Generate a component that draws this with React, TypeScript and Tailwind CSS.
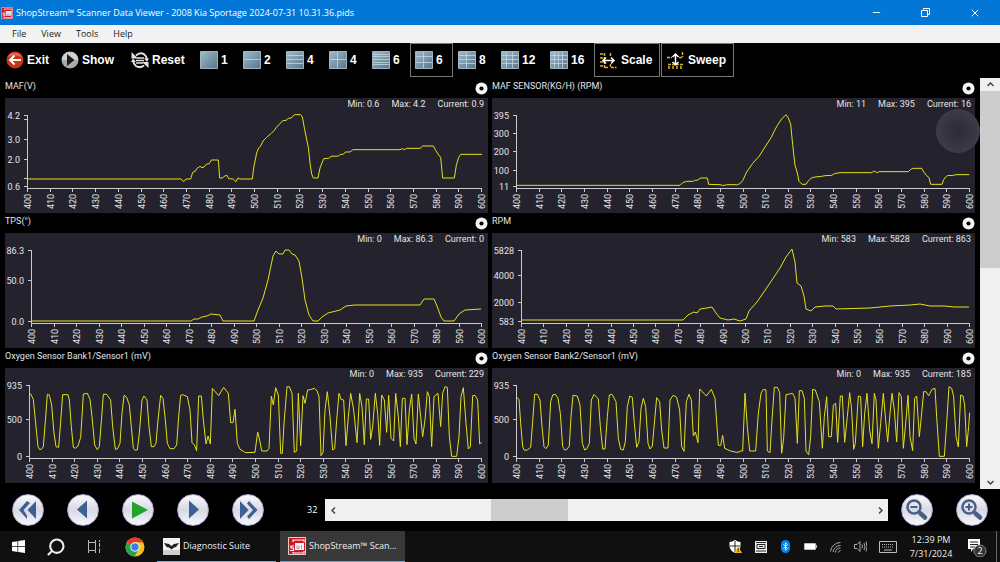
import type { ReactNode } from 'react'
import { Bluetooth, Minus, Search, X } from 'lucide-react'

interface Segment {
  at: number
  pts: string
}

interface Tick {
  y: number
  label?: string
}

interface Pid {
  title: string
  min: string
  max: string
  current: string
  axis: number
  end: number
  ticks: Tick[]
  // trace origin and units per pixel
  ox: number
  oy: number
  unit: number
  segments: Segment[]
}

const PIDS: Pid[] = [
  {
    title: 'MAF(V)', min: '0.6', max: '4.2', current: '0.9',
    axis: 22, end: 476,
    ticks: [{ y: 17, label: '4.2' }, { y: 21 }, { y: 41, label: '3.0' }, { y: 61, label: '2.0' }, { y: 80 }, { y: 88, label: '0.6' }],
    ox: -5, oy: -20, unit: 3,
    segments: [
      { at: 0, pts: '81,303 544,303 551,311 558,303 572,303 578,283 586,280 590,272 600,265 606,269 612,267 620,258 628,257 634,246 655,246 659,300 668,300 672,295 681,292 686,302 700,303 708,311 714,300 720,303 750,303' },
      { at: 750, pts: '0,303 7,303 11,270 20,225 26,210 32,204 39,189 50,178 65,165 72,158 80,147 90,137 98,128 108,127 115,121 124,120 133,110 152,110 157,117 164,155 175,208 181,262 185,288 190,300 204,300 210,270 221,242 236,241 243,235 265,234 272,229 280,229 286,222 300,222 309,215 450,215 457,212 464,215 470,211 510,211 518,204 550,204 556,215 564,228 572,238 578,300 613,300 619,262 626,238 632,229 696,229' },
    ],
  },
  {
    title: 'MAF SENSOR(KG/H) (RPM)', min: '11', max: '395', current: '16',
    axis: 24, end: 477,
    ticks: [{ y: 17, label: '395' }, { y: 35, label: '300' }, { y: 53, label: '200' }, { y: 72, label: '100' }, { y: 88, label: '11' }],
    ox: -2, oy: -20, unit: 3,
    segments: [
      { at: 0, pts: '79,322 570,322 578,314 590,310 610,310 614,307 625,306 630,300 652,300 656,319 690,320 697,322 705,322 710,320 735,320 740,321 745,319 750,317' },
      { at: 750, pts: '0,317 8,308 20,282 38,256 58,234 75,207 94,178 100,165 112,142 125,123 138,110 145,120 152,138 158,200 165,262 172,285 177,310 186,319 198,319 204,310 214,300 225,297 245,295 255,293 275,292 283,287 300,284 395,284 400,280 405,280 410,284 418,281 505,281 512,274 520,271 545,271 552,283 560,293 567,299 572,319 606,319 611,305 617,297 622,293 640,292 648,290 688,290' },
    ],
  },
  {
    title: 'TPS(°)', min: '0', max: '86.3', current: '0',
    axis: 26, end: 476,
    ticks: [{ y: 17, label: '86.3' }, { y: 47, label: '50.0' }, { y: 88, label: '0.0' }],
    ox: -5, oy: -233, unit: 1,
    segments: [
      { at: 0, pts: '31,321 191,321 194,319 198,319 202,317 207,316 211,314 220,315 223,321 254,321 258,310 263,298 268,280 273,256 276,251 279,254 283,254 285,250 289,250 292,254 295,255 299,261 302,278 305,300 309,315 313,321 318,321 322,317 328,313 340,310 346,306 355,305 420,305 424,299 434,299 437,306 441,317 444,321 454,321 459,314 465,310 481,309' },
    ],
  },
  {
    title: 'RPM', min: '583', max: '5828', current: '863',
    axis: 29, end: 477,
    ticks: [{ y: 17, label: '5828' }, { y: 42, label: '4000' }, { y: 69, label: '2000' }, { y: 88, label: '583' }],
    ox: -492, oy: -233, unit: 1,
    segments: [
      { at: 0, pts: '521,320 683,320 688,315 694,312 697,313 700,309 707,308 712,307 716,313 720,318 728,320 734,319 740,321 746,319 749,311 757,302 770,283 780,268 786,257 792,249 795,262 797,283 801,286 804,296 806,309 811,311 815,307 825,306 833,306 836,309 870,308 890,306 910,305 920,304 930,306 945,306 954,307 969,307' },
    ],
  },
  {
    title: 'Oxygen Sensor Bank1/Sensor1 (mV)', min: '0', max: '935', current: '229',
    axis: 24, end: 476,
    ticks: [{ y: 17, label: '935' }, { y: 51, label: '500' }, { y: 88, label: '0' }],
    ox: -5, oy: -18, unit: 3,
    segments: [
      { at: 0, pts: '88,130 92,132 100,148 106,210 114,290 118,298 124,298 130,290 136,215 142,133 148,135 155,165 162,250 168,290 176,292 182,215 188,134 204,134 208,150 214,230 220,292 226,295 234,288 242,262 246,200 250,132 262,130 270,148 276,200 284,285 292,299 298,290 304,215 310,133 320,133 332,150 338,230 346,298 352,297 360,280 366,190 372,136 380,142 388,165 394,230 400,295 404,300 412,300 418,250 426,150 432,138 441,150 447,230 454,290 462,290 468,280 474,210 482,136 489,145 496,210 502,280 510,296 522,296 530,285 536,200 542,136 548,134 562,140 570,180 576,278 583,285 590,302 596,138 604,138 610,210 618,282 624,258 631,282 637,115 656,137 671,112 685,130 692,218 699,218 705,178 712,280 720,298 732,305 735,308' },
      { at: 735, pts: '0,308 30,307 38,246 44,270 50,303 66,303 72,295 79,138 85,165 92,113 100,135 107,310 112,310 117,220 126,110 133,110 141,130 148,307 155,303 160,130 167,287 174,137 180,160 188,120 196,119 208,115 216,122 222,140 228,317 234,308 240,180 247,125 255,200 263,300 269,296 275,210 282,130 288,148 296,150 303,287 310,200 317,130 326,180 336,278 344,130 351,170 358,284 364,147 371,147 377,268 383,230 391,130 398,190 404,286 410,135 418,150 425,247 431,136 438,265 446,273 452,130 460,200 466,290 472,145 480,145 486,284 493,180 500,132 507,265 513,282 520,132 527,200 533,260 540,210 547,125 553,140 560,290 567,140 579,130 587,230 593,130 600,110 607,112 613,260 620,319 635,319 642,260 648,140 655,113 663,220 670,297 676,290 683,137 690,136 698,150 704,282 710,277' },
    ],
  },
  {
    title: 'Oxygen Sensor Bank2/Sensor1 (mV)', min: '0', max: '935', current: '185',
    axis: 24, end: 477,
    ticks: [{ y: 17, label: '935' }, { y: 51, label: '500' }, { y: 88, label: '0' }],
    ox: -2, oy: -18, unit: 3,
    segments: [
      { at: 0, pts: '80,142 87,148 92,220 98,290 103,301 112,300 122,292 128,215 134,133 142,133 150,150 156,230 162,290 168,296 175,285 182,155 188,135 196,133 204,145 211,190 218,290 224,300 230,299 238,288 243,200 249,136 262,138 270,165 277,280 284,300 290,297 298,280 304,150 312,133 325,147 331,230 338,297 345,297 352,200 358,135 366,133 378,155 385,265 392,298 400,300 406,275 412,170 419,138 427,142 433,220 440,292 447,275 453,175 460,145 467,170 474,280 480,297 487,288 494,210 500,143 509,155 515,240 522,294 534,294 540,150 549,136 560,142 569,180 575,290 582,304 589,155 597,133 604,150 610,258 616,246 624,278 629,117 649,138 664,118 675,145 685,286 692,286 698,256 704,295 722,303 740,307 750,305' },
      { at: 750, pts: '0,303 8,303 15,130 22,230 29,303 47,303 55,190 63,130 70,118 78,120 82,303 90,308 96,210 103,112 112,112 119,128 125,310 131,265 138,134 158,130 165,145 172,280 178,122 186,122 193,145 198,303 206,314 212,260 218,118 226,120 238,155 247,295 253,200 260,140 266,260 274,260 280,165 287,160 293,277 301,138 307,138 314,277 322,200 329,128 335,180 341,298 346,280 355,138 362,140 368,290 374,190 381,130 389,240 396,281 403,130 408,150 415,295 422,220 430,130 437,210 443,276 450,190 456,130 463,180 470,276 477,128 484,140 490,295 497,220 504,136 510,260 518,302 524,145 530,138 538,260 545,190 551,125 558,125 566,137 576,118 585,115 590,200 598,319 613,319 620,220 627,110 635,115 641,140 648,260 655,291 662,135 669,138 674,165 680,290 686,230 689,188' },
    ],
  },
]

const SAMPLES = Array.from({ length: 21 }, (_, i) => 400 + i * 10)

function Chart({ pid }: { pid: Pid }) {
  const step = (pid.end - pid.axis) / (SAMPLES.length - 1)
  return (
    <svg viewBox="0 0 483 115" className="block w-full bg-[#24222c] text-[9px]" fill="#e4e4e8" role="img" aria-label={pid.title}>
      <g stroke="#c9c9cf" strokeWidth="1" shapeRendering="crispEdges">
        <path d={`M${pid.axis + 0.5} 17V91`} />
        <path d={`M${pid.axis} 90.5H${pid.end + 1}`} />
        {pid.ticks.map(t => <path key={t.y} d={`M${pid.axis - 3} ${t.y + 0.5}h3`} />)}
        {SAMPLES.map((s, i) => <path key={s} d={`M${Math.round(pid.axis + i * step) + 0.5} 91v3`} />)}
      </g>
      {pid.ticks.map(t => t.label && (
        <text key={t.y} x={pid.axis - 7} y={t.y + 4} textAnchor="end">{t.label}</text>
      ))}
      {SAMPLES.map((s, i) => (
        <text key={s} transform={`translate(${Math.round(pid.axis + i * step) + 4} 111) rotate(-90)`}>{s}</text>
      ))}
      <g fill="none" stroke="#e3e01c">
        {pid.segments.map(seg => (
          <polyline
            key={seg.at}
            points={seg.pts}
            transform={`translate(${pid.ox + seg.at / pid.unit} ${pid.oy}) scale(${1 / pid.unit})`}
            vectorEffect="non-scaling-stroke"
          />
        ))}
      </g>
    </svg>
  )
}

function PidPanel({ pid }: { pid: Pid }) {
  return (
    <section className="text-[9px] text-[#e4e4e8]">
      <header className="flex h-5 justify-between">
        <h2 className="leading-4">{pid.title}</h2>
        <button aria-label={`${pid.title} options`} className="self-center">
          <svg width="13" height="13" viewBox="0 0 13 13">
            <circle cx="6.5" cy="6.5" r="6" fill="#f4f4f4" />
            <circle cx="6.5" cy="6.5" r="2.1" fill="#000" />
          </svg>
        </button>
      </header>
      <div className="relative">
        <Chart pid={pid} />
        <div className="absolute top-0 right-1 flex gap-3 leading-3">
          <span>Min: {pid.min}</span>
          <span>Max: {pid.max}</span>
          <span>Current: {pid.current}</span>
        </div>
      </div>
    </section>
  )
}

function ShopStreamIcon({ size }: { size: number }) {
  return (
    <svg width={size} height={size} viewBox="0 0 18 18" className="shrink-0">
      <path fill="#cf1520" stroke="#e9c9cb" d="M.5.5h17v17H.5z" />
      <path fill="none" stroke="#fff" strokeWidth="1.2" d="M5 5V3h11v2M16 14v2H5v-1M6 9H3v2h2.500v2.500H2" />
      <path fill="#f5f7fa" d="M7 6h9v7H7z" />
      <path fill="none" stroke="#8ba0bb" d="M9 8.500v3h2v-3M13.500 8v4" />
    </svg>
  )
}

function GridIcon({ cols, rows }: { cols: number; rows: number }) {
  const w = 16 / cols
  const h = 16 / rows
  const lines = [
    ...Array.from({ length: cols - 1 }, (_, i) => `M${Math.round((i + 1) * w) + 0.5} 1v16`),
    ...Array.from({ length: rows - 1 }, (_, i) => `M1 ${Math.round((i + 1) * h) + 0.5}h16`),
  ]
  return (
    <svg width="18" height="18" viewBox="0 0 18 18" className="shrink-0">
      <defs>
        <linearGradient id="cell" x1="0" y1="0" x2="1" y2="1">
          <stop offset="0" stopColor="#9fbccb" />
          <stop offset="1" stopColor="#58758a" />
        </linearGradient>
      </defs>
      <path fill="url(#cell)" stroke="#9db4c1" d="M.5.5h17v17H.5z" />
      <path stroke="#c3d6df" strokeOpacity=".8" d={lines.join('')} />
    </svg>
  )
}

const LAYOUTS = [
  { n: 1, cols: 1, rows: 1 },
  { n: 2, cols: 1, rows: 2 },
  { n: 4, cols: 1, rows: 4 },
  { n: 4, cols: 2, rows: 2 },
  { n: 6, cols: 1, rows: 6 },
  { n: 6, cols: 2, rows: 3, active: true },
  { n: 8, cols: 2, rows: 4 },
  { n: 12, cols: 3, rows: 4 },
  { n: 16, cols: 4, rows: 4 },
]

function Toolbar() {
  return (
    <div className="flex h-[35px] items-stretch pb-px text-xs font-bold text-white [font-family:'Liberation_Sans',Arial,sans-serif]">
      <button className="flex w-[55px] items-center gap-[3px] pl-1.5">
        <svg width="18" height="18" viewBox="0 0 18 18">
          <circle cx="9" cy="9" r="8.500" fill="#cb3415" />
          <path d="M2 6a8 8 0 0 1 14 0q-7-3-14 0z" fill="#e5684d" />
          <path d="M15 9H4M8.500 4.500L4 9l4.500 4.500" fill="none" stroke="#fff" strokeWidth="2" />
        </svg>
        Exit
      </button>
      <button className="flex w-[70px] items-center gap-[3px] pl-1.5">
        <svg width="18" height="18" viewBox="0 0 18 18">
          <circle cx="9" cy="9" r="8.500" fill="#aaa" />
          <path d="M1 9a8 8 0 0 1 16 0z" fill="#d2d2d2" />
          <path d="M6 3l7.500 6L6 15z" fill="#1c1c1c" />
        </svg>
        Show
      </button>
      <button className="flex w-[70px] items-center gap-[3px] pl-1.5">
        <svg width="18" height="18" viewBox="0 0 18 18" fill="none" stroke="#e2e2e2">
          <path strokeWidth="2" d="M5 4.500Q9 .8 13 3.200Q15.500 5 15.800 8M13 14.500Q9 17.500 5 15Q2.500 13 2.200 10" />
          <path fill="#e2e2e2" stroke="none" d="M.5 1v6.500H7zM17.500 17v-6H11zM13 7.500h5L16 11zM0 11h5L2 7.500z" />
          <path strokeWidth="1.300" d="M6 7h7M5 9.500h8M5 12h7" />
        </svg>
        Reset
      </button>
      {LAYOUTS.map((l, i) => (
        <button
          key={i}
          aria-label={`Show ${l.n} charts`}
          className={`flex items-center gap-[3px] border pl-1 ${l.n > 9 ? 'w-[49px]' : 'w-[43px]'} ${l.active ? 'border-[#777]' : 'border-transparent'}`}
        >
          <GridIcon cols={l.cols} rows={l.rows} />
          {l.n}
        </button>
      ))}
      <button className="flex w-[66px] items-center gap-1 border border-[#777] pl-[5px]">
        <svg width="17" height="17" viewBox="0 0 17 17" fill="none">
          <path stroke="#d8b62a" strokeWidth="1.500" strokeDasharray="3 1" d="M0 2h4M0 6h4M0 10h4M0 14h4M4.500 1v15M10.500 1v4M10.500 12v3.500h6M5 15.500h4" />
          <path stroke="#fff" strokeWidth="1.500" d="M3 8.500h11M6 5.500l-3 3 3 3M11 5.500l3 3-3 3" />
        </svg>
        Scale
      </button>
      <button className="ml-px flex w-[73px] items-center gap-1 border border-[#777] pl-[5px]">
        <svg width="17" height="17" viewBox="0 0 17 17" fill="none">
          <path stroke="#d8b62a" strokeWidth="1.500" strokeDasharray="3 1" d="M2 17v-4M6 17v-4M10 17v-4M14 17v-4M1 12.500h15M0 5.500h5M12 5.500h4M15.500 0v5" />
          <path stroke="#fff" strokeWidth="1.500" d="M8.500 2v11M5.500 5l3-3 3 3M5.500 10l3 3 3-3" />
        </svg>
        Sweep
      </button>
    </div>
  )
}

function RoundButton({ label, children }: { label: string; children: ReactNode }) {
  return (
    <button
      aria-label={label}
      className="size-8 shrink-0 rounded-full border border-[#aaa3cd] bg-linear-to-b from-[#fafafd] via-[#d9d9e6] to-[#f6f6fb]"
    >
      <svg viewBox="0 0 30 30" fill="#3d5f94" className="size-full">{children}</svg>
    </button>
  )
}

function Playback() {
  return (
    <div className="flex h-[42px] items-center bg-black px-3">
      <div className="flex gap-[23px]">
        <RoundButton label="Rewind"><path d="M23 6v18l-8.500-9zM14 6l-8 9 8 9v-3.500L10.500 15 17 8z" /></RoundButton>
        <RoundButton label="Step back"><path d="M19 5.500v18L9 14.500z" /></RoundButton>
        <RoundButton label="Play"><path d="M9 6.500l16 8.500-16 8.500z" fill="#22a32f" /></RoundButton>
        <RoundButton label="Step forward"><path d="M11 5.500l10 9-10 9z" /></RoundButton>
        <RoundButton label="Fast forward"><path d="M7 6v18l8.500-9zM16 6l8.500 9-8.500 9-2-2.500 6-6.500-6-6.500z" /></RoundButton>
      </div>
      <label htmlFor="frame" className="ml-[43px] w-[18px] text-[9px] text-white">32</label>
      <div className="flex h-[22px] flex-1 items-stretch bg-[#f0f0f0] text-[#444]">
        <button aria-label="Previous frame" className="flex w-4 items-center justify-center">
          <svg width="5" height="7" fill="none" stroke="currentColor" strokeWidth="1.500"><path d="M4 .5l-3 3 3 3" /></svg>
        </button>
        <input
          id="frame"
          type="range"
          defaultValue={33}
          className="h-full min-w-0 flex-1 appearance-none bg-transparent [&::-webkit-slider-thumb]:h-[22px] [&::-webkit-slider-thumb]:w-[77px] [&::-webkit-slider-thumb]:appearance-none [&::-webkit-slider-thumb]:bg-[#cdcdcd]"
        />
        <button aria-label="Next frame" className="flex w-4 items-center justify-center">
          <svg width="5" height="7" fill="none" stroke="currentColor" strokeWidth="1.500"><path d="M1 .5l3 3-3 3" /></svg>
        </button>
      </div>
      <div className="ml-[13px] flex gap-[23px]">
        <RoundButton label="Zoom out">
          <circle cx="12" cy="12" r="6.500" fill="none" stroke="#4a5f85" strokeWidth="2.500" />
          <path d="M8.500 12h7M17 17l7 6.500" fill="none" stroke="#4a5f85" strokeWidth="2" />
          <path d="M18.500 18.500l4.500 4" stroke="#4a5f85" strokeWidth="4.500" strokeLinecap="round" />
        </RoundButton>
        <RoundButton label="Zoom in">
          <circle cx="12" cy="12" r="6.500" fill="none" stroke="#4a5f85" strokeWidth="2.500" />
          <path d="M8.500 12h7M12 8.500v7M17 17l7 6.500" fill="none" stroke="#4a5f85" strokeWidth="2" />
          <path d="M18.500 18.500l4.500 4" stroke="#4a5f85" strokeWidth="4.500" strokeLinecap="round" />
        </RoundButton>
      </div>
    </div>
  )
}

function Taskbar() {
  return (
    <footer className="flex h-[31px] items-stretch bg-[#101010] text-[9px] whitespace-nowrap text-[#eee]">
      <button aria-label="Start" className="flex w-[37px] items-center justify-center">
        <svg width="13" height="13" viewBox="0 0 13 13" fill="#fff"><path d="M0 2l5.500-.8v5H0zM6.200 1.100L13 0v6.200H6.200zM0 6.900h5.500v5L0 11.100zM6.200 6.900H13V13l-6.800-1z" /></svg>
      </button>
      <button aria-label="Search" className="flex w-[38px] items-center justify-center">
        <Search size={20} strokeWidth={2.500} className="-scale-x-100" />
      </button>
      <button aria-label="Task view" className="flex w-[37px] items-center justify-center">
        <svg width="14" height="13" viewBox="0 0 14 13" fill="none" stroke="#bbb"><path d="M1.500 0v2.500h7V0M1.500 13v-2.500h7V13M1.500 2.500v8M8.500 2.500v8M12.500 0v2M12.500 3v4M12.500 8.500V13" /></svg>
      </button>
      <button aria-label="Chrome" className="flex w-[45px] items-center justify-center">
        <svg width="20" height="20" viewBox="0 0 20 20">
          <circle cx="10" cy="10" r="9.500" fill="#fbc116" />
          <path d="M10 10L1.800 5.200a9.500 9.500 0 0 1 16.500.1H10z" fill="#e33b2e" />
          <path d="M10 10L1.800 5.200A9.500 9.500 0 0 0 9.500 19.500L14 12z" fill="#2ba24c" />
          <circle cx="10" cy="10" r="4.700" fill="#fff" />
          <circle cx="10" cy="10" r="3.700" fill="#3b7de9" />
        </svg>
      </button>
      <button className="flex w-[119px] items-center gap-[3px] border-b border-[#6fa8d6] pl-1.5">
        <svg width="17" height="17" viewBox="0 0 17 17">
          <path fill="#f2f2f2" d="M0 0h17v17H0z" />
          <path fill="#cfcfcf" d="M0 12h17v5H0z" />
          <path fill="#222" d="M1 5l5 1 2.500 2L11 6l5-1-3 4-2 .5-2.500 2L6 9.500 3.500 9z" />
        </svg>
        Diagnostic Suite
      </button>
      <button className="ml-1 flex w-[125px] items-center gap-[3px] border-b border-[#6fa8d6] bg-[#383838] pl-2">
        <ShopStreamIcon size={18} />
        ShopStream™ Scan...
      </button>
      <div className="ml-auto flex items-stretch">
        <button aria-label="Windows Security" className="flex w-[25px] items-center justify-center">
          <svg width="13" height="13" viewBox="0 0 13 13">
            <path fill="#fff" d="M6 0q3 2 5.500 2v4Q11 11 6 13 1 11 .5 6V2Q3 2 6 0z" />
            <path stroke="#222" d="M6 1v11M1 6h10" />
            <path fill="#f5b31b" d="M9 6l4 7H5.500z" />
            <path stroke="#222" d="M9.200 8.500v2M9.200 11.200v.8" />
          </svg>
        </button>
        <button aria-label="Display" className="flex w-[25px] items-center justify-center">
          <svg width="12" height="12" viewBox="0 0 12 12" fill="none"><path fill="#eee" d="M0 0h12v12H0z" /><path stroke="#222" d="M2 3.500h8v4H2zM4 5.500h4M1 1.500h10M1 10h10" /></svg>
        </button>
        <button aria-label="Bluetooth" className="flex w-[25px] items-center justify-center">
          <span className="flex h-[13px] w-[9px] items-center justify-center rounded-full bg-[#0a84e8]"><Bluetooth size={9} strokeWidth={2.500} className="shrink-0" /></span>
        </button>
        <button aria-label="Battery" className="flex w-[25px] items-center justify-center">
          <svg width="13" height="7" viewBox="0 0 13 7"><path fill="#fff" d="M1 1h10v5H1z" /><path fill="none" stroke="#bbb" d="M.5.5h11v6H.5z" /><path fill="#bbb" d="M12 2h1v3h-1z" /></svg>
        </button>
        <button aria-label="Network" className="flex w-[25px] items-center justify-center">
          <svg width="12" height="12" viewBox="0 0 12 12" fill="none" stroke="#aaa"><path d="M.5 10.500A10 10 0 0 1 10.500 1.500M3 11A7.500 7.500 0 0 1 10.500 4.500M5.500 11.500a5 5 0 0 1 5-4.500M8.500 11.500a2.500 2.500 0 0 1 2-2" /></svg>
        </button>
        <button aria-label="Volume" className="flex w-[24px] items-center justify-center">
          <svg width="13" height="11" viewBox="0 0 13 11" fill="none" stroke="#aaa"><path d="M.5 3.500H3l3-3v10l-3-3H.5zM8 3.500q1 2 0 4M10 2q2 3.500 0 7M12 .5q2 5 0 10" /></svg>
        </button>
        <button aria-label="Touch keyboard" className="flex w-[31px] items-center justify-center">
          <svg width="18" height="12" viewBox="0 0 18 12" fill="none" stroke="#bbb"><path d="M.5.5h17v11H.5z" /><path strokeDasharray="1 1" d="M3 3.500h12M3 6h12" /><path d="M5 9h8" /></svg>
        </button>
        <div className="flex w-[56px] flex-col items-center justify-center leading-[14px]">
          <span>12:39 PM</span>
          <span>7/31/2024</span>
        </div>
        <button aria-label="2 notifications" className="flex w-[37px] items-center pl-2">
          <svg width="20" height="20" viewBox="0 0 20 20">
            <path fill="#fff" d="M1 2h12v10H6l-2 3v-3H1z" />
            <path stroke="#222" d="M3 5h8M3 7.500h8M3 10h5" />
            <circle cx="13" cy="14" r="6" fill="#333" stroke="#888" />
            <text x="13" y="17" textAnchor="middle" fontSize="9" fill="#fff">2</text>
          </svg>
        </button>
        <div className="mr-[3px] w-px bg-[#666]" />
      </div>
    </footer>
  )
}

export default function App() {
  return (
    <div className="bg-black [font-family:'Open_Sans','Noto_Sans',sans-serif]">
      <header className="flex h-[25px] items-stretch bg-[#0277d7] text-white">
        <div className="flex flex-1 items-center gap-[3px] pl-px text-[9px]">
          <ShopStreamIcon size={12} />
          <h1>ShopStream™ Scanner Data Viewer - 2008 Kia Sportage 2024-07-31 10.31.36.pids</h1>
        </div>
        <button aria-label="Minimize" className="flex w-[49px] items-center justify-center"><Minus size={11} strokeWidth={2} /></button>
        <button aria-label="Restore" className="flex w-[49px] items-center justify-center">
          <svg width="9" height="9" viewBox="0 0 9 9" fill="none" stroke="currentColor"><path d="M.5 2.500h6v6h-6zM2.500 2V.5h6v6H7" /></svg>
        </button>
        <button aria-label="Close" className="mr-px flex w-[49px] items-center justify-center"><X size={12} strokeWidth={2} /></button>
      </header>
      <nav className="flex h-[18px] items-center gap-[15px] bg-[#f3f3f3] pl-3 text-[9px] text-[#1a1a1a]">
        <button>File</button>
        <button>View</button>
        <button>Tools</button>
        <button>Help</button>
      </nav>
      <Toolbar />
      <div className="flex">
        <main className="relative grid flex-1 grid-cols-2 gap-x-1 px-[5px] pb-1.5 [font-family:'Liberation_Sans_Narrow',Roboto,sans-serif]">
          {PIDS.map(pid => <PidPanel key={pid.title} pid={pid} />)}
          <div className="absolute top-[31px] right-0 size-11 rounded-full bg-radial from-[#2c2a35] to-[#45434e]" />
        </main>
        <div className="flex w-5 flex-col bg-[#f0f0f0] text-[#444]">
          <button aria-label="Scroll up" className="flex h-[13px] items-center justify-center">
            <svg width="7" height="5" fill="none" stroke="currentColor" strokeWidth="1.500"><path d="M.5 4l3-3 3 3" /></svg>
          </button>
          <div className="flex-1"><div className="h-[46%] bg-[#cdcdcd]" /></div>
          <button aria-label="Scroll down" className="flex h-[13px] items-center justify-center">
            <svg width="7" height="5" fill="none" stroke="currentColor" strokeWidth="1.500"><path d="M.5 1l3 3 3-3" /></svg>
          </button>
        </div>
      </div>
      <Playback />
      <Taskbar />
    </div>
  )
}
